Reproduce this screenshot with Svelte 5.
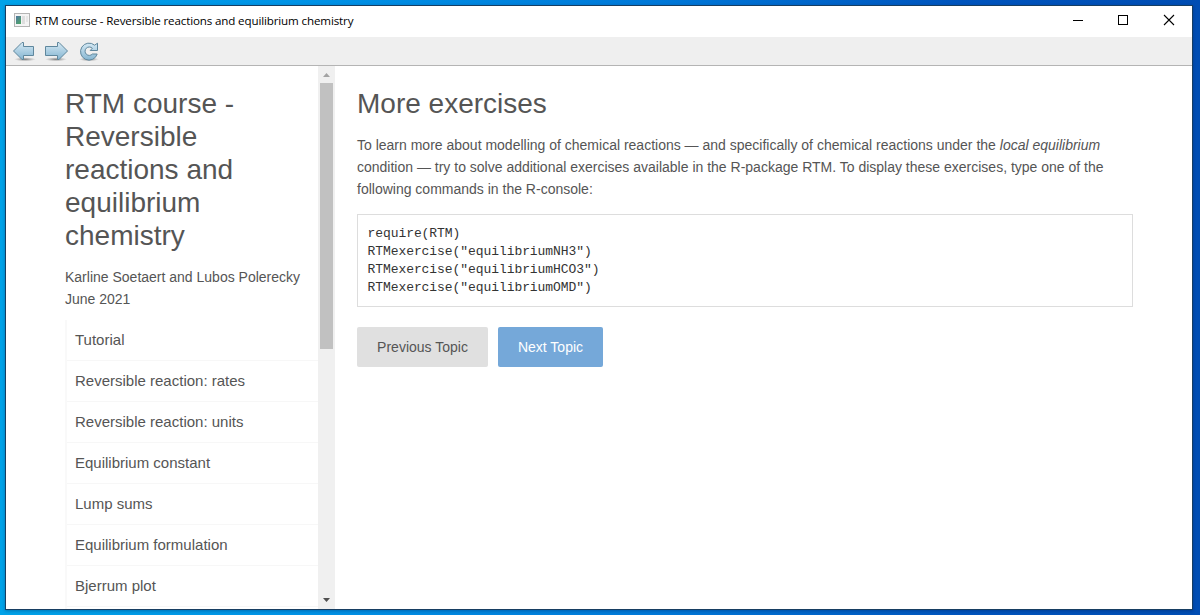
<script>
  const topics = [
    'Tutorial',
    'Reversible reaction: rates',
    'Reversible reaction: units',
    'Equilibrium constant',
    'Lump sums',
    'Equilibrium formulation',
    'Bjerrum plot'
  ];
  const code = `require(RTM)
RTMexercise("equilibriumNH3")
RTMexercise("equilibriumHCO3")
RTMexercise("equilibriumOMD")`;
</script>

<div class="desktop">
  <div class="window">
    <header class="titlebar">
      <svg class="app-icon" width="16" height="14" viewBox="0 0 16 14">
        <defs>
          <linearGradient id="pane" x1="0" y1="0" x2="0.7" y2="1">
            <stop offset="0" stop-color="#5277a0" />
            <stop offset="1" stop-color="#4fa36c" />
          </linearGradient>
        </defs>
        <rect x="0.5" y="0.5" width="15" height="13" fill="#f4f4f4" stroke="#b4b4b4" />
        <rect x="2" y="3" width="5" height="8" fill="url(#pane)" />
        <rect x="8" y="3" width="3" height="8" fill="#dedede" />
        <rect x="12" y="3" width="2" height="6" fill="#e6e6e6" />
      </svg>
      <span class="title">RTM course - Reversible reactions and equilibrium chemistry</span>
      <div class="controls">
        <svg width="46" height="31" viewBox="0 0 46 31"><path d="M19 14.5h10" stroke="#000" /></svg>
        <svg width="46" height="31" viewBox="0 0 46 31"><rect x="18.5" y="9.5" width="9" height="9" fill="none" stroke="#000" /></svg>
        <svg width="46" height="31" viewBox="0 0 46 31"><path d="M18 9l10 10M28 9L18 19" stroke="#000" stroke-width="1.1" /></svg>
      </div>
    </header>

    <nav class="toolbar">
      <svg width="96" height="28" viewBox="0 0 96 28">
        <defs>
          <linearGradient id="blue" x1="0" y1="0" x2="0" y2="1">
            <stop offset="0" stop-color="#d5e9f4" />
            <stop offset="1" stop-color="#85b5d1" />
          </linearGradient>
          <radialGradient id="shade">
            <stop offset="0" stop-color="#555" stop-opacity="0.75" />
            <stop offset="1" stop-color="#777" stop-opacity="0" />
          </radialGradient>
        </defs>
        <ellipse cx="19" cy="22.3" rx="11" ry="2" fill="url(#shade)" />
        <ellipse cx="50" cy="22.3" rx="11" ry="2" fill="url(#shade)" />
        <ellipse cx="83" cy="22.3" rx="10" ry="2" fill="url(#shade)" />
        <path d="M7.5 14L16 5.5h1.5v4h10v9h-10v4H16z" fill="url(#blue)" stroke="#5f879d" stroke-linejoin="round" />
        <path d="M61.5 14L53 5.5h-1.5v4h-12v9h12v4H53z" fill="url(#blue)" stroke="#5f879d" stroke-linejoin="round" />
        <path d="M88.6 8.2L91.5 6.2V13.5H84.2L86.3 11.3A4.2 4.2 0 1 0 86.4 17H91.2A8.5 8.5 0 1 1 88.6 8.2Z" fill="url(#blue)" stroke="#5f879d" stroke-linejoin="round" />
      </svg>
    </nav>

    <div class="view">
      <aside>
        <div class="sidebar">
          <h1>RTM course - Reversible reactions and equilibrium chemistry</h1>
          <p class="authors">Karline Soetaert and Lubos Polerecky<br />June 2021</p>
          <ul>
            {#each topics as topic}
              <li>{topic}</li>
            {/each}
          </ul>
        </div>
        <div class="scrollbar">
          <svg width="17" height="17" viewBox="0 0 17 17"><path d="M5 11L8.5 7L12 11z" fill="#a3a3a3" /></svg>
          <div class="thumb"></div>
          <svg width="17" height="17" viewBox="0 0 17 17"><path d="M5 6L8.5 10L12 6z" fill="#505050" /></svg>
        </div>
      </aside>
      <main>
        <h2>More exercises</h2>
        <p>
          To learn more about modelling of chemical reactions — and specifically of chemical reactions under the <em>local equilibrium</em><br />
          condition — try to solve additional exercises available in the R-package RTM. To display these exercises, type one of the<br />
          following commands in the R-console:
        </p>
        <pre>{code}</pre>
        <div class="actions">
          <button class="prev">Previous Topic</button>
          <button class="next">Next Topic</button>
        </div>
      </main>
    </div>
  </div>
</div>

<style>
  :global(body) { margin: 0; overflow: hidden; }
  .desktop {
    box-sizing: border-box;
    width: 1200px;
    height: 615px;
    padding: 5px 7px 5px 5px;
    background: linear-gradient(90deg, #00a2e8 0%, #0093e6 25%, #0078d8 55%, #0054bd 80%, #004db3 100%);
    font-family: "Liberation Sans", Arial, sans-serif;
    color: #555;
  }
  .window {
    box-sizing: border-box;
    width: 1188px;
    height: 605px;
    border: 1px solid #173e62;
    background: #fff;
    display: flex;
    flex-direction: column;
    overflow: hidden;
    box-shadow: 0 1px 3px rgba(0, 20, 60, 0.3);
  }
  .titlebar {
    height: 31px;
    flex: none;
    display: flex;
    align-items: center;
    padding-left: 8px;
  }
  .app-icon { display: block; margin-top: -3px; }
  .title {
    margin: -1px 0 0 5px;
    font: 11.6px/16px "Open Sans", "Noto Sans", sans-serif;
    letter-spacing: -0.14px;
    color: #000;
    white-space: nowrap;
  }
  .controls { margin-left: auto; display: flex; }
  .controls svg { display: block; }
  .toolbar {
    height: 28px;
    flex: none;
    background: #efefef;
    border-bottom: 1px solid #b4b4b4;
  }
  .toolbar svg { display: block; }
  .view { flex: 1; min-height: 0; display: flex; }
  aside { width: 329px; flex: none; display: flex; }
  .sidebar {
    flex: 1;
    min-width: 0;
    overflow: hidden;
    padding: 21px 0 0 59px;
  }
  h1, h2 {
    margin: 0;
    font-size: 28px;
    line-height: 33px;
    font-weight: 400;
  }
  h1 { width: 200px; }
  .authors { margin: 14px 0 10px; font-size: 14px; line-height: 22px; white-space: nowrap; }
  ul { height: 300px; margin: 0; padding: 0; list-style: none; border-left: 2px solid #f9f9f9; }
  li {
    height: 40px;
    padding-left: 8px;
    border-bottom: 1px solid #f7f7f7;
    font-size: 15px;
    line-height: 40px;
    white-space: nowrap;
  }
  .scrollbar {
    width: 17px;
    flex: none;
    background: #f0f0f0;
    display: flex;
    flex-direction: column;
  }
  .scrollbar svg { display: block; flex: none; }
  .thumb { width: 13px; height: 266px; margin: 0 auto auto 2px; background: #c1c1c1; }
  main { flex: 1; padding: 21px 59px 0 22px; }
  main p { margin: 14px 0; font-size: 14px; line-height: 22px; white-space: nowrap; }
  pre {
    box-sizing: border-box;
    width: 776px;
    height: 93px;
    margin: 0;
    padding: 10px 9.5px;
    border: 1px solid #ddd;
    font: 13px/18px "Liberation Mono", monospace;
    letter-spacing: -0.07px;
    color: #333;
  }
  .actions { display: flex; gap: 10px; margin-top: 20px; }
  button {
    height: 40px;
    border: 0;
    border-radius: 2px;
    padding: 0;
    font: 14px "Liberation Sans", Arial, sans-serif;
  }
  .prev { width: 131px; background: #e0e0e0; color: #555; }
  .next { width: 105px; background: #75a8d9; color: #fff; }
</style>
